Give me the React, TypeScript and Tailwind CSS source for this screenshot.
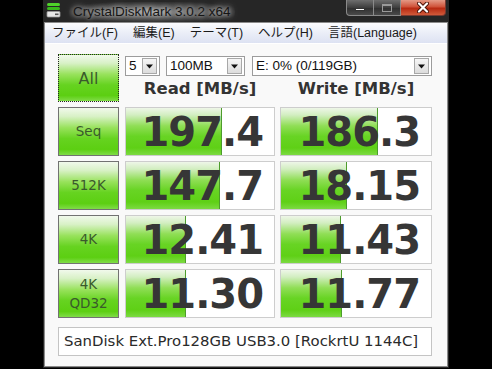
import React from "react";

const UI = "font-['Liberation_Sans','Noto_Sans_CJK_JP',sans-serif]";
const DJ = "font-['DejaVu_Sans',sans-serif]";

const BTN =
  "bg-[linear-gradient(to_bottom,#f1f9ec_0%,#d8f1c6_18%,#98e25c_42%,#66d320_65%,#5ccf12_88%,#80dc48_100%)]";
const BAR =
  "bg-[linear-gradient(to_bottom,#eef6e8_0%,#d2eec0_15%,#90de56_38%,#68d424_60%,#5fd016_85%,#7cda42_100%)]";

type Row = { label: string[]; read: string; readBar: number; write: string; writeBar: number };

const ROWS: Row[] = [
  { label: ["Seq"], read: "197.4", readBar: 96, write: "186.3", writeBar: 97 },
  { label: ["512K"], read: "147.7", readBar: 94, write: "18.15", writeBar: 66 },
  { label: ["4K"], read: "12.41", readBar: 60, write: "11.43", writeBar: 60 },
  { label: ["4K", "QD32"], read: "11.30", readBar: 60, write: "11.77", writeBar: 61 },
];

const MENU = ["ファイル(F)", "編集(E)", "テーマ(T)", "ヘルプ(H)", "言語(Language)"];

function AppIcon() {
  return (
    <svg width="15" height="16" viewBox="0 0 15 16">
      <rect x="1" y="1" width="13" height="3" rx="1.5" fill="#4fd12a" />
      <rect x="1" y="5" width="13" height="3" rx="1.5" fill="#39b81c" />
      <rect x="1" y="9.5" width="13" height="5.5" rx="1" fill="#e8e8e8" stroke="#9a9a9a" strokeWidth="0.8" />
      <rect x="9" y="11.5" width="3.5" height="1.6" fill="#555" />
    </svg>
  );
}

function Combo({ w, text }: { w: string; text: string }) {
  return (
    <div className={`${w} h-[20px] flex items-center border border-[#9c9c9c] bg-white pl-[3px] pr-[2px]`}>
      <span className={`${UI} flex-1 text-[13.5px] text-[#111] leading-none`}>{text}</span>
      <div className="w-[15px] h-[16px] flex items-center justify-center border border-[#a8a8a8] bg-[linear-gradient(to_bottom,#f6f6f6,#dcdcdc)]">
        <svg width="7" height="5" viewBox="0 0 7 5">
          <path d="M0 0.5 H7 L3.5 4.5 Z" fill="#111" />
        </svg>
      </div>
    </div>
  );
}

function Label({ lines, dotted }: { lines: string[]; dotted?: boolean }) {
  return (
    <div
      className={`w-[61px] h-full flex flex-col items-center justify-center ${BTN} border ${
        dotted ? "border-dotted border-[#222]" : "border-[#727272]"
      }`}
    >
      {lines.map((l) => (
        <span key={l} className={`${DJ} ${dotted ? "text-[16px]" : "text-[13.5px]"} leading-[19px] text-[#3a5a2c]`}>
          {l}
        </span>
      ))}
    </div>
  );
}

function Value({ value, bar }: { value: string; bar: number }) {
  return (
    <div className="relative h-full border border-[#cdcdcd] bg-white">
      <div className={`absolute left-0 top-0 bottom-0 ${BAR} border-r border-[#4d9c2c]`} style={{ width: `${bar}px` }} />
      <div className="relative h-full flex items-center justify-end pr-[11px]">
        <span className={`${DJ} font-bold text-[40px] tracking-[-1px] leading-none text-[#363636]`}>{value}</span>
      </div>
    </div>
  );
}

export default function App() {
  return (
    <div className="w-[492px] h-[369px] bg-black flex pl-[43px] overflow-hidden">
      <div className="w-[406px] h-[368px] bg-[#262626] flex flex-col px-[1px] pb-[1px]">
        {/* title bar */}
        <div className="h-[22px] flex items-start">
          <div className="pt-[2px] pl-[2px]">
            <AppIcon />
          </div>
          <span
            className={`${UI} ml-[8px] mt-[2px] px-[4px] text-[13.5px] text-[#151515] rounded-full bg-[radial-gradient(ellipse_at_center,rgba(200,200,200,0.55),rgba(120,120,120,0.25)_60%,transparent_80%)] [text-shadow:0_0_5px_rgba(255,255,255,0.8),0_0_10px_rgba(255,255,255,0.55)]`}
          >
            CrystalDiskMark 3.0.2 x64
          </span>
          <div className="ml-auto mr-[2px] flex h-[16px]">
            <div className="w-[28px] h-full flex items-center justify-center rounded-bl-[4px] border border-t-0 border-[#8a8a8a] bg-[linear-gradient(to_bottom,#6e6e6e,#3e3e3e_50%,#2e2e2e_51%,#4a4a4a)]">
              <div className="w-[10px] h-[3px] mt-[4px] bg-white border border-[#333]" />
            </div>
            <div className="w-[27px] h-full flex items-center justify-center border border-t-0 border-l-0 border-[#8a8a8a] bg-[linear-gradient(to_bottom,#6e6e6e,#3e3e3e_50%,#2e2e2e_51%,#4a4a4a)]">
              <div className="w-[10px] h-[8px] border border-[#9a9a9a] border-t-2" />
            </div>
            <div className="w-[45px] h-full flex items-center justify-center rounded-br-[4px] border border-t-0 border-l-0 border-[#7a3a30] bg-[linear-gradient(to_bottom,#e49a86,#d0533a_45%,#b82a12_55%,#d05a3a)]">
              <svg width="12" height="11" viewBox="0 0 12 11">
                <path d="M2 1.5 L10 9.5 M10 1.5 L2 9.5" stroke="#4a1208" strokeWidth="4" strokeLinecap="round" />
                <path d="M2 1.5 L10 9.5 M10 1.5 L2 9.5" stroke="#fff" strokeWidth="2.2" strokeLinecap="round" />
              </svg>
            </div>
          </div>
        </div>

        {/* client */}
        <div className="flex-1 flex flex-col border border-[#8c8c8c] bg-[#f9f9f9]">
          <div className="h-[21px] flex items-center gap-[15px] pl-[7px] border-b border-white bg-[linear-gradient(to_bottom,#fcfcfe,#eceff8_45%,#dde2f2)]">
            {MENU.map((m) => (
              <span key={m} className={`${UI} text-[12.5px] text-[#1a1a1a] leading-none`}>
                {m}
              </span>
            ))}
          </div>

          <div className="pl-[13px] pt-[10px]">
            <div className="grid grid-cols-[62px_150px_152px] grid-rows-[48px_49px_49px_49px_49px] gap-x-[5px] gap-y-[5px]">
              <Label lines={["All"]} dotted />
              <div className="col-span-2 flex flex-col pt-[2px]">
                <div className="flex">
                  <Combo w="w-[35px]" text="5" />
                  <div className="w-[6px]" />
                  <Combo w="w-[79px]" text="100MB" />
                  <div className="w-[7px]" />
                  <Combo w="w-[180px]" text="E: 0% (0/119GB)" />
                </div>
                <div className="flex flex-1 items-center">
                  <span className={`${DJ} w-[150px] text-center font-bold text-[16.5px] text-[#333]`}>Read [MB/s]</span>
                  <span className={`${DJ} ml-[5px] w-[152px] text-center font-bold text-[16.5px] text-[#333]`}>
                    Write [MB/s]
                  </span>
                </div>
              </div>

              {ROWS.map((r) => (
                <React.Fragment key={r.label.join("")}>
                  <Label lines={r.label} />
                  <Value value={r.read} bar={r.readBar} />
                  <Value value={r.write} bar={r.writeBar} />
                </React.Fragment>
              ))}
            </div>

            <div className="mt-[9px] w-[374px] h-[29px] flex items-center pl-[5px] border border-[#c4c4c4] bg-white">
              <span className={`${DJ} text-[14.9px] text-[#2a2a2a] leading-none`}>
                SanDisk Ext.Pro128GB USB3.0 [RockrtU 1144C]
              </span>
            </div>
          </div>
        </div>
      </div>
    </div>
  );
}
